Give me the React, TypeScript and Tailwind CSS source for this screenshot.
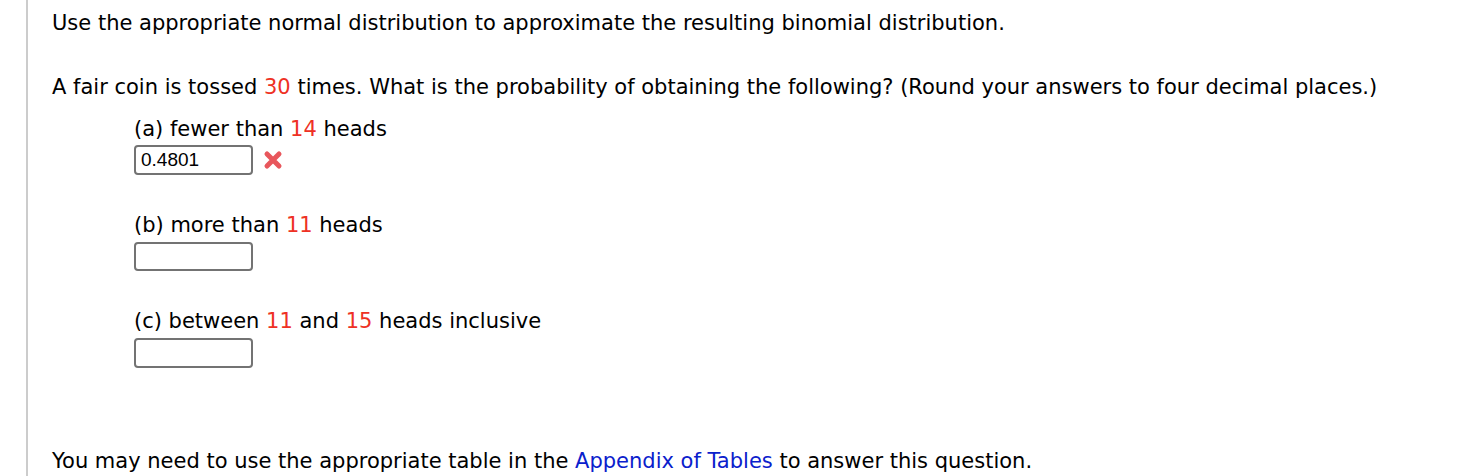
export default function App() {
  const red = "text-[#ee3124]"
  return (
    <div className="h-[476px] w-[1480px] bg-white text-black font-['DejaVu_Sans',Verdana,sans-serif] text-[21px]">
      <div className="ml-[26px] h-full border-l-2 border-[#cccccc] pl-[24px] pt-[10px]">
        <p className="leading-[26px]">Use the appropriate normal distribution to approximate the resulting binomial distribution.</p>
        <p className="mt-[38px] leading-[26px]">
          A fair coin is tossed <span className={red}>30</span> times. What is the probability of obtaining the following? (Round your answers to four decimal places.)
        </p>
        <div className="ml-[82px]">
          <div className="mt-[16px] leading-[26px]">
            (a) fewer than <span className={red}>14</span> heads
          </div>
          <div className="mt-[3px] flex items-center gap-[8px]">
            <div className="h-[30px] w-[119px] rounded-[4px] border-2 border-[#737373] px-[5px] font-['Liberation_Sans',Arial,sans-serif] text-[19px] leading-[26px]">
              0.4801
            </div>
            <svg width="22" height="22" viewBox="0 0 22 22" className="ml-[1px]">
              <path d="M5 5 L17 17 M17 5 L5 17" stroke="#e8575c" strokeWidth="5" strokeLinecap="round" />
            </svg>
          </div>
          <div className="mt-[37px] leading-[26px]">
            (b) more than <span className={red}>11</span> heads
          </div>
          <div className="mt-[4px] h-[29px] w-[119px] rounded-[4px] border-2 border-[#737373]"></div>
          <div className="mt-[37px] leading-[26px]">
            (c) between <span className={red}>11</span> and <span className={red}>15</span> heads inclusive
          </div>
          <div className="mt-[4px] h-[30px] w-[119px] rounded-[4px] border-2 border-[#737373]"></div>
        </div>
        <p className="mt-[80px] leading-[26px]">
          You may need to use the appropriate table in the <span className="text-[#0a20cc]">Appendix of Tables</span> to answer this question.
        </p>
      </div>
    </div>
  )
}
